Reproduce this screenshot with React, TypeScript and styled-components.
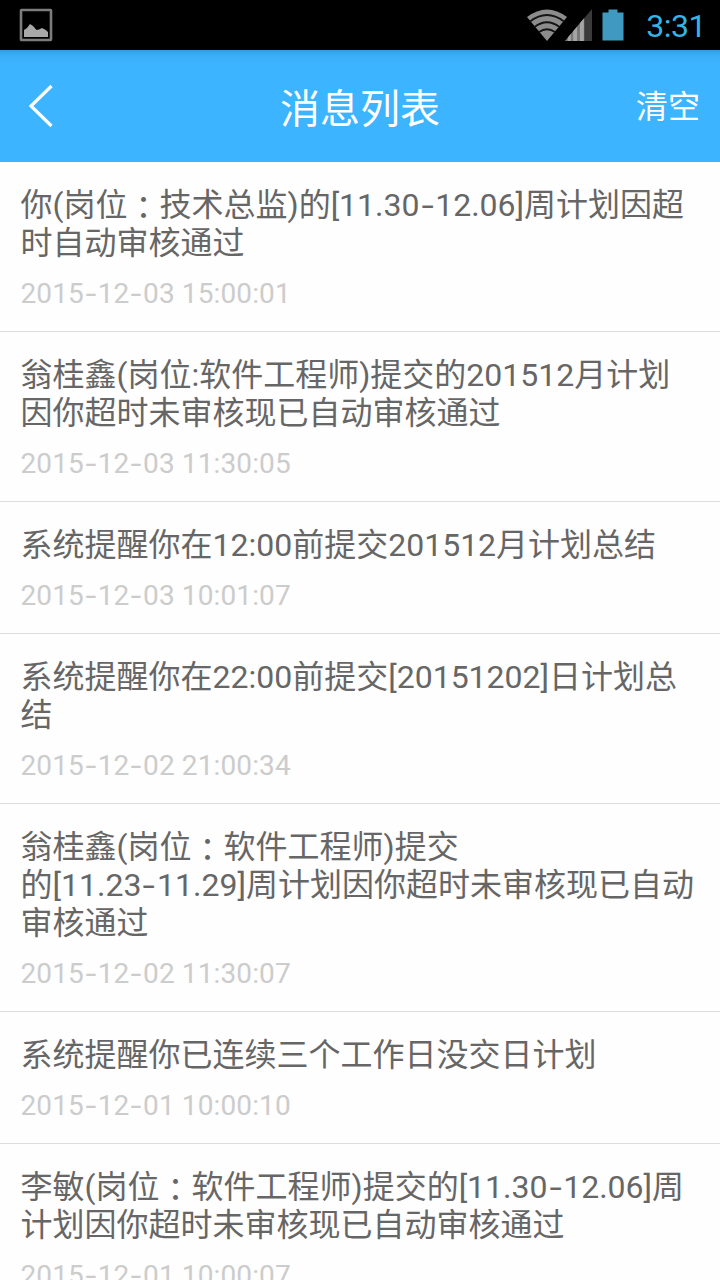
import React from 'react';
import styled, { createGlobalStyle } from 'styled-components';

const Global = createGlobalStyle`
  * { box-sizing: border-box; }
  html, body { margin: 0; height: 100%; overflow: hidden; background: #fff; }
  body { font-family: Roboto, "Noto Sans CJK SC", sans-serif; }
`;
const Screen = styled.div`
  width: 720px; height: 1280px; overflow: hidden; background: #fefefe;
`;
const StatusBar = styled.div`
  height: 50px; background: #000; display: flex; align-items: center;
  justify-content: space-between; padding: 0 14px 0 19px;
`;
const StatusRight = styled.div`
  display: flex; align-items: center;
`;
const Clock = styled.span`
  color: #33b5e5; font-size: 32px; line-height: 50px; margin-left: 22px;
  letter-spacing: -0.5px; padding-top: 1px; height: 50px;
`;
const Header = styled.header`
  height: 112px; color: #fff; display: grid;
  background: linear-gradient(#3399d9 0, #38a8ee 3px, #3bb0f9 8px, #3cb4ff 14px);
  grid-template-columns: 1fr auto 1fr; align-items: center; padding: 0 20px;
`;
const Title = styled.h1`
  margin: 0; padding-top: 7px; font-size: 40px; font-weight: 400; line-height: 50px;
`;
const Clear = styled.span`
  font-size: 32px; line-height: 38px; padding-top: 2px; justify-self: end;
`;
const Item = styled.article`
  border-bottom: 1px solid #ddd; padding: 24px 20px 20px 20.5px;
`;
const Line = styled.div`
  font-size: 32px; line-height: 38px; color: #666; white-space: nowrap;
`;
const Time = styled.div`
  margin-top: 14px; font-size: 28px; line-height: 35px; color: #ccc;
  letter-spacing: 0.12px; white-space: nowrap;
`;
const Dash = styled.span`
  display: inline-block; width: 0.49em; text-align: center; letter-spacing: 0;
  transform: scaleX(1.35);
  -webkit-text-stroke: 0.2px currentColor;
`;
const WideColon = styled.span`
  font-family: "Noto Sans CJK TC", sans-serif; line-height: 1;
  position: relative; top: 3px;
`;
const Battery = styled.svg`
  margin-left: 10px;
`;
const Wifi = styled.svg`
  margin-right: -2px;
`;

const messages = [
  { lines: ['你(岗位：技术总监)的[11.30-12.06]周计划因超', '时自动审核通过'], time: '2015-12-03 15:00:01' },
  { lines: ['翁桂鑫(岗位:软件工程师)提交的201512月计划', '因你超时未审核现已自动审核通过'], time: '2015-12-03 11:30:05' },
  { lines: ['系统提醒你在12:00前提交201512月计划总结'], time: '2015-12-03 10:01:07' },
  { lines: ['系统提醒你在22:00前提交[20151202]日计划总', '结'], time: '2015-12-02 21:00:34' },
  { lines: ['翁桂鑫(岗位：软件工程师)提交', '的[11.23-11.29]周计划因你超时未审核现已自动', '审核通过'], time: '2015-12-02 11:30:07' },
  { lines: ['系统提醒你已连续三个工作日没交日计划'], time: '2015-12-01 10:00:10' },
  { lines: ['李敏(岗位：软件工程师)提交的[11.30-12.06]周', '计划因你超时未审核现已自动审核通过'], time: '2015-12-01 10:00:07' },
];

function Glyphs({ text }: { text: string }) {
  return (
    <>
      {text.split(/([-：])/).map((part, i) => {
        if (part === '-') return <Dash key={i}>-</Dash>;
        if (part === '：') return <WideColon key={i} lang="zh-TW">：</WideColon>;
        return part;
      })}
    </>
  );
}

const PictureIcon = () => (
  <svg width="34" height="34" viewBox="0 0 34 34">
    <rect x="2" y="2" width="30" height="30" rx="0.5" fill="none" stroke="#7c7c7c" strokeWidth="2.6" />
    <path d="M5 29V22L8 20L11 16L14 18L17.500 22L20 21.500L23 20L26 21.500L29 24V29Z" fill="#a8a8a8" />
  </svg>
);

const WifiIcon = () => (
  <Wifi width="40" height="32" viewBox="0 0 40 32">
    <path d="M0 8Q20 -7 40 8L20 32Z" fill="#8c8c8c" />
    <path d="M3 12.5Q20 -0.5 37 12.5M7.5 18Q20 8.5 32.5 18M12 23Q20 17.5 28 23" fill="none" stroke="#141414" strokeWidth="1.9" />
  </Wifi>
);

const SignalIcon = () => (
  <svg width="27" height="32" viewBox="0 0 28 32" preserveAspectRatio="none">
    <path d="M0 32L28 0V32Z" fill="#3a3a3a" />
    <path d="M0 32L20 9V32Z" fill="#777" />
    <path d="M3 32V28.500L6 25V32ZM8.500 32V22.300L12.500 17.700V32ZM15.500 32V14.200L19.500 9.600V32Z" fill="#a5a5a5" />
  </svg>
);

const BatteryIcon = () => (
  <Battery width="22" height="32" viewBox="0 0 22 32">
    <path d="M0.500 3.500H6.500V0.500H15.500V3.500H21.500V31.500H0.500Z" fill="#4099c0" />
  </Battery>
);

export default function App() {
  return (
    <Screen>
      <Global />
      <StatusBar>
        <PictureIcon />
        <StatusRight>
          <WifiIcon />
          <SignalIcon />
          <BatteryIcon />
          <Clock>3:31</Clock>
        </StatusRight>
      </StatusBar>
      <Header>
        <svg width="40" height="44" viewBox="0 0 40 44">
          <path d="M31.500 2L11 22L31.500 42" fill="none" stroke="#fff" strokeWidth="3.2" />
        </svg>
        <Title>消息列表</Title>
        <Clear>清空</Clear>
      </Header>
      {messages.map((m) => (
        <Item key={m.time}>
          {m.lines.map((l) => <Line key={l}><Glyphs text={l} /></Line>)}
          <Time><Glyphs text={m.time} /></Time>
        </Item>
      ))}
    </Screen>
  );
}
